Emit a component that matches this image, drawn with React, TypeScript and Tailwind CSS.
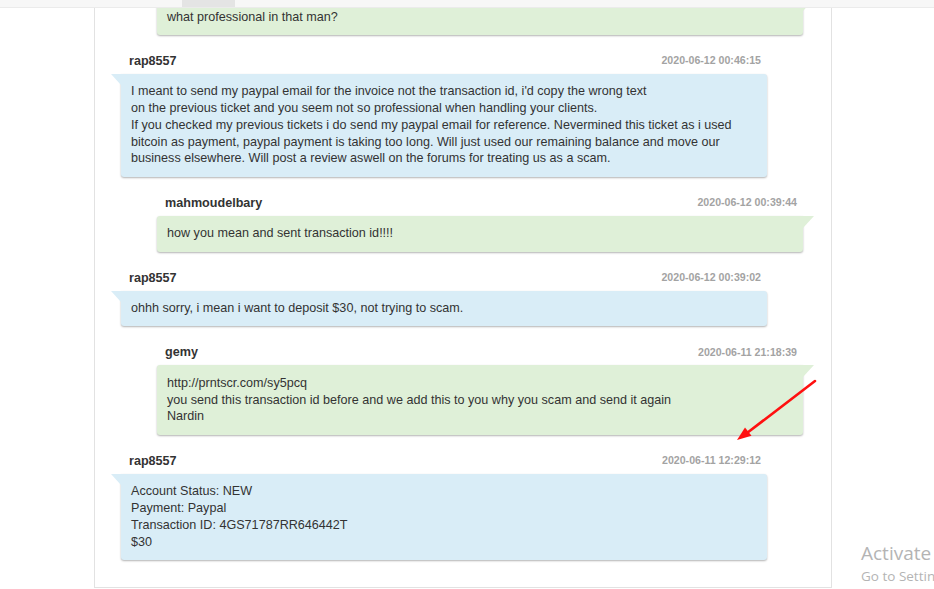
import React from 'react'

type Msg = {
  side: 'staff' | 'client'
  name?: string
  time?: string
  lines: string[]
}

const messages: Msg[] = [
  { side: 'staff', lines: ['what professional in that man?'] },
  {
    side: 'client',
    name: 'rap8557',
    time: '2020-06-12 00:46:15',
    lines: [
      "I meant to send my paypal email for the invoice not the transaction id, i'd copy the wrong text",
      'on the previous ticket and you seem not so professional when handling your clients.',
      'If you checked my previous tickets i do send my paypal email for reference. Nevermined this ticket as i used bitcoin as payment, paypal payment is taking too long. Will just used our remaining balance and move our business elsewhere. Will post a review aswell on the forums for treating us as a scam.',
    ],
  },
  { side: 'staff', name: 'mahmoudelbary', time: '2020-06-12 00:39:44', lines: ['how you mean and sent transaction id!!!!'] },
  { side: 'client', name: 'rap8557', time: '2020-06-12 00:39:02', lines: ['ohhh sorry, i mean i want to deposit $30, not trying to scam.'] },
  {
    side: 'staff',
    name: 'gemy',
    time: '2020-06-11 21:18:39',
    lines: [
      'http://prntscr.com/sy5pcq',
      'you send this transaction id before and we add this to you why you scam and send it again',
      'Nardin',
    ],
  },
  {
    side: 'client',
    name: 'rap8557',
    time: '2020-06-11 12:29:12',
    lines: ['Account Status: NEW', 'Payment: Paypal', 'Transaction ID: 4GS71787RR646442T', '$30'],
  },
]

function Reply({ m, first }: { m: Msg; first?: boolean }) {
  const staff = m.side === 'staff'
  return (
    <div className={(staff ? 'ml-[62px]' : 'ml-[26px]') + ' w-[646px] ' + (first ? '' : 'mt-[18.5px]')}>
      {m.name && (
        <div className="flex justify-between items-center h-[16px] mb-[4.5px] pl-[8px] pr-[6px]">
          <span className="text-[12.6px] font-bold text-[#333]">{m.name}</span>
          <span className="text-[10.6px] font-bold text-[#a3a3a3]">{m.time}</span>
        </div>
      )}
      <div
        className={
          'relative px-[10px] py-[9.5px] text-[12.6px] leading-[16.8px] text-[#333] shadow-[0_1px_2px_rgba(0,0,0,0.3)] ' +
          (staff ? 'bg-[#dff0d8] rounded-b-[3px] rounded-tl-[3px]' : 'bg-[#d9edf7] rounded-b-[3px] rounded-tr-[3px]')
        }
      >
        {staff ? (
          <div className="absolute -right-[11px] top-0 w-0 h-0 border-t-[12px] border-t-[#dff0d8] border-r-[11px] border-r-transparent" />
        ) : (
          <div className="absolute -left-[10px] top-0 w-0 h-0 border-t-[11px] border-t-[#d9edf7] border-l-[10px] border-l-transparent" />
        )}
        {m.lines.map((l, i) => (
          <div key={i}>{l}</div>
        ))}
      </div>
    </div>
  )
}

export default function App() {
  return (
    <div className="relative w-[934px] h-[589px] overflow-hidden bg-white font-['Liberation_Sans',Arial,sans-serif]">
      <div className="flex h-[8px] bg-[#f7f7f7] border-b border-[#ebebeb]">
        <div className="ml-[182px] w-[53px] h-full bg-[#e4e4e4]" />
      </div>
      <div className="h-[581px] overflow-hidden pl-[94px]">
        <div className="-mt-[9px] w-[738px] border-x border-b border-[#e2e2e2] pb-[27px]">
          {messages.map((m, i) => (
            <Reply key={i} m={m} first={i === 0} />
          ))}
        </div>
      </div>

      <svg className="absolute left-0 top-0 pointer-events-none" width="934" height="589">
        <line x1="815" y1="381" x2="747" y2="433" stroke="#ff1010" strokeWidth="2.6" strokeLinecap="round" />
        <polygon points="737,440 751.5,435.8 745,427.4" fill="#ff1010" />
      </svg>

      <div className="absolute left-[861px] top-[541px] font-['Open_Sans',sans-serif] text-[#b4b4b4] whitespace-nowrap">
        <div className="text-[19px] leading-[24px]">Activate Windows</div>
        <div className="text-[13.5px] leading-[18px] mt-[2px]">Go to Settings to activate Windows.</div>
      </div>
    </div>
  )
}
